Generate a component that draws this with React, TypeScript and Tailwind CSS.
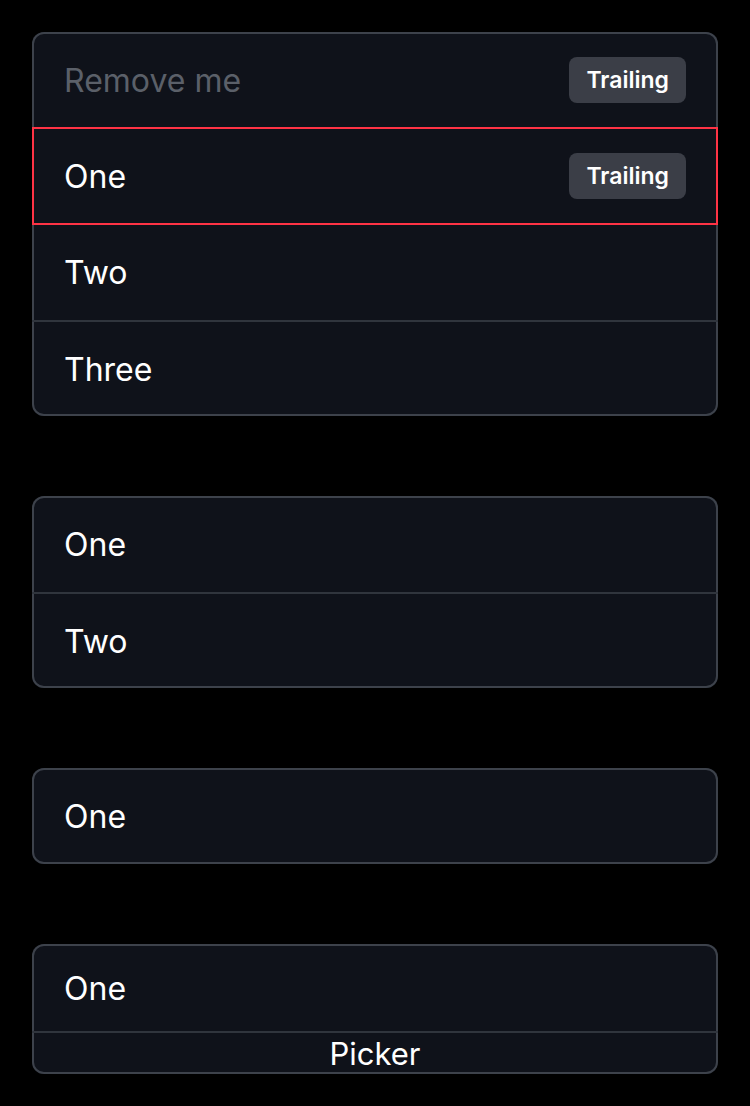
import React from 'react';

function Badge() {
  return (
    <span className="flex h-[46px] items-center rounded-[8px] bg-[#3b3e47] px-[17px] text-[23px] font-semibold leading-none text-white">
      Trailing
    </span>
  );
}

function Row({
  label,
  muted,
  trailing,
  selected,
  divider,
  height = 'h-[96px]',
}: {
  label: string;
  muted?: boolean;
  trailing?: boolean;
  selected?: boolean;
  divider?: boolean;
  height?: string;
}) {
  return (
    <div
      className={`relative flex ${height} items-center justify-between px-[32px] ${
        divider ? 'border-t-2 border-[#30353d]' : ''
      }`}
    >
      <span className={`pt-[2px] text-[32px] leading-none ${muted ? 'text-[#5b6069]' : 'text-white'}`}>{label}</span>
      {trailing && <Badge />}
      {selected && (
        <div className="pointer-events-none absolute inset-x-0 top-[-1px] bottom-[-1px] border-2 border-[#ff3345]" />
      )}
    </div>
  );
}

function Card({ children }: { children: React.ReactNode }) {
  return <div className="rounded-[12px] bg-[#0f121a] ring-2 ring-inset ring-[#3d424b]">{children}</div>;
}

export default function App() {
  return (
    <div className="min-h-[1106px] bg-black px-[32px] pt-[32px] font-['Inter',sans-serif]">
      <div className="flex flex-col gap-[80px]">
        <Card>
          <Row label="Remove me" muted trailing />
          <Row label="One" trailing selected />
          <Row label="Two" />
          <Row label="Three" divider />
        </Card>
        <Card>
          <Row label="One" />
          <Row label="Two" divider />
        </Card>
        <Card>
          <Row label="One" />
        </Card>
        <Card>
          <Row label="One" height="h-[87px]" />
          <div className="flex h-[43px] items-center justify-center border-t-2 border-[#30353d]">
            <span className="text-[31px] leading-none text-white">Picker</span>
          </div>
        </Card>
      </div>
    </div>
  );
}
